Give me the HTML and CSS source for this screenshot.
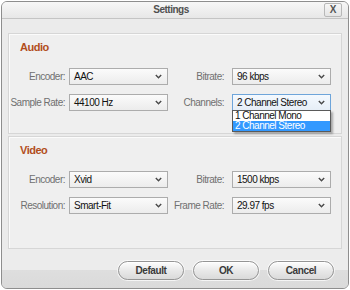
FILE: index.html
```html
<!DOCTYPE html>
<html>
<head>
<meta charset="utf-8">
<link rel="stylesheet" href="styles.css">
</head>
<body>
<div class="window">
  <div class="titlebar">
    <span class="title">Settings</span>
    <div class="close">X</div>
  </div>
  <section class="panel audio">
    <h2 class="heading">Audio</h2>
    <div class="grid">
      <span class="label">Encoder:</span>
      <div class="select">AAC<svg class="chev" width="7" height="5" viewBox="0 0 7 5"><polyline points="0.8,1 3.5,3.8 6.2,1" fill="none" stroke="#4a4a4a" stroke-width="1.4"/></svg></div>
      <span class="label">Bitrate:</span>
      <div class="select">96 kbps<svg class="chev" width="7" height="5" viewBox="0 0 7 5"><polyline points="0.8,1 3.5,3.8 6.2,1" fill="none" stroke="#4a4a4a" stroke-width="1.4"/></svg></div>
      <span class="label">Sample Rate:</span>
      <div class="select">44100 Hz<svg class="chev" width="7" height="5" viewBox="0 0 7 5"><polyline points="0.8,1 3.5,3.8 6.2,1" fill="none" stroke="#4a4a4a" stroke-width="1.4"/></svg></div>
      <span class="label">Channels:</span>
      <div class="select focused">2 Channel Stereo<svg class="chev" width="7" height="5" viewBox="0 0 7 5"><polyline points="0.8,1 3.5,3.8 6.2,1" fill="none" stroke="#4a4a4a" stroke-width="1.4"/></svg>
        <ul class="dropdown">
          <li class="option">1 Channel Mono</li>
          <li class="option selected">2 Channel Stereo</li>
        </ul>
      </div>
    </div>
  </section>
  <section class="panel video">
    <h2 class="heading">Video</h2>
    <div class="grid">
      <span class="label">Encoder:</span>
      <div class="select">Xvid<svg class="chev" width="7" height="5" viewBox="0 0 7 5"><polyline points="0.8,1 3.5,3.8 6.2,1" fill="none" stroke="#4a4a4a" stroke-width="1.4"/></svg></div>
      <span class="label">Bitrate:</span>
      <div class="select">1500 kbps<svg class="chev" width="7" height="5" viewBox="0 0 7 5"><polyline points="0.8,1 3.5,3.8 6.2,1" fill="none" stroke="#4a4a4a" stroke-width="1.4"/></svg></div>
      <span class="label">Resolution:</span>
      <div class="select">Smart-Fit<svg class="chev" width="7" height="5" viewBox="0 0 7 5"><polyline points="0.8,1 3.5,3.8 6.2,1" fill="none" stroke="#4a4a4a" stroke-width="1.4"/></svg></div>
      <span class="label">Frame Rate:</span>
      <div class="select">29.97 fps<svg class="chev" width="7" height="5" viewBox="0 0 7 5"><polyline points="0.8,1 3.5,3.8 6.2,1" fill="none" stroke="#4a4a4a" stroke-width="1.4"/></svg></div>
    </div>
  </section>
  <div class="footer">
    <button class="btn">Default</button>
    <button class="btn">OK</button>
    <button class="btn">Cancel</button>
  </div>
</div>
</body>
</html>
```
FILE: styles.css
```css
* { box-sizing: border-box; }
html, body { margin: 0; padding: 0; background: #ffffff; }
body {
  padding: 1px 0 0 1px;
  font-family: "Liberation Sans", Arial, sans-serif;
  font-size: 10px;
  letter-spacing: -0.5px;
}
.window {
  width: 348px;
  height: 288px;
  border: 1px solid #8e8e8e;
  border-radius: 6px;
  background: #ebebeb;
  display: flex;
  flex-direction: column;
  overflow: hidden;
}
.titlebar {
  height: 17px;
  flex: none;
  display: flex;
  align-items: flex-start;
  background: linear-gradient(#f7f7f7, #e7e7e7);
  border-bottom: 1px solid #c4c4c4;
}
.title {
  flex: 1;
  text-align: center;
  padding-left: 16px;
  font-weight: bold;
  color: #505050;
  line-height: 16px;
}
.close {
  width: 18px;
  height: 14px;
  margin: 1px 6px 0 0;
  border: 1px solid #b8b8b8;
  border-radius: 2px;
  background: linear-gradient(#f6f6f6, #e4e4e4);
  color: #555;
  font-size: 10px;
  font-weight: bold;
  letter-spacing: 0;
  text-align: center;
  line-height: 12px;
}
.panel {
  margin: 0 6px;
  border: 1px solid #d6d6d6;
  box-shadow: inset 1px 1px 0 #fbfbfb;
  background: #efefef;
  padding: 7px 0 0 0;
  flex: none;
}
.audio { margin-top: 14px; height: 101px; }
.video { margin-top: 2px; height: 113px; }
.heading {
  margin: 0 0 14px 11px;
  font-size: 11px;
  line-height: 13px;
  font-weight: bold;
  color: #b24e1c;
  letter-spacing: -0.5px;
}
.grid {
  display: grid;
  grid-template-columns: 60px 99px 64px 99px;
  grid-auto-rows: 17px;
  row-gap: 9px;
}
.label {
  text-align: right;
  padding-right: 4px;
  color: #707070;
  line-height: 17px;
  white-space: nowrap;
}
.label:nth-child(4n+3) { padding-right: 8px; }
.select {
  position: relative;
  display: flex;
  align-items: center;
  justify-content: space-between;
  height: 17px;
  padding: 0 5px 0 4px;
  border: 1px solid #acacac;
  background: linear-gradient(#fbfbfb, #ececec);
  color: #111;
  white-space: nowrap;
}
.select.focused {
  border-color: #6ea5da;
  background: linear-gradient(#f4f9fe, #e6eef7);
}
.chev { flex: none; }
.dropdown {
  position: absolute;
  top: 15px;
  left: -1px;
  width: 99px;
  margin: 0;
  padding: 0;
  list-style: none;
  background: #fff;
  border: 1px solid #5a5a5a;
  box-shadow: 2px 2px 2px rgba(0, 0, 0, 0.3);
  z-index: 2;
}
.option {
  height: 10px;
  line-height: 10px;
  padding-left: 2px;
  color: #111;
}
.option.selected {
  background: #3399ff;
  color: #fff;
}
.footer {
  flex: 1;
  display: flex;
  justify-content: flex-end;
  align-items: flex-start;
  gap: 9px;
  padding: 12px 14px 0 0;
  background: linear-gradient(#ececec 0, #ececec 21px, #dedede 21px, #dadada 100%);
}
.btn {
  width: 66px;
  height: 19px;
  border: 1px solid #959595;
  border-radius: 10px;
  background: linear-gradient(#fdfdfd, #e9e9e9 50%, #dadada);
  box-shadow: 0 0 0 1px rgba(255, 255, 255, 0.7), inset 0 1px 0 #fff;
  font-family: "Liberation Sans", Arial, sans-serif;
  font-size: 10px;
  font-weight: bold;
  letter-spacing: -0.4px;
  color: #3a3a3a;
  padding: 0;
}
```
